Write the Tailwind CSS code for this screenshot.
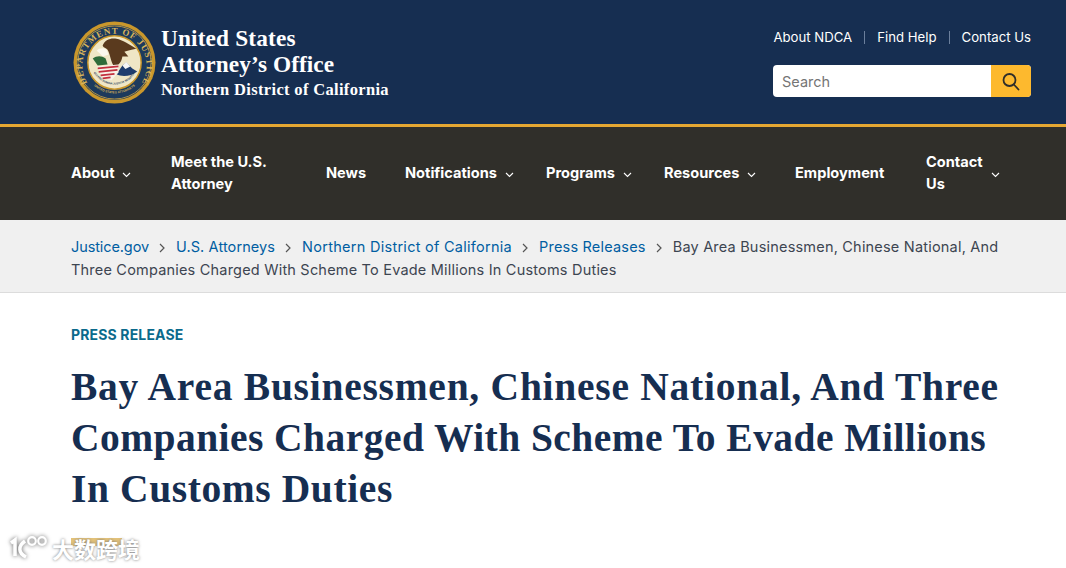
<!DOCTYPE html>
<html lang="en">
<head>
<meta charset="utf-8">
<title>Press Release</title>
<script src="https://cdn.jsdelivr.net/npm/@tailwindcss/browser@4"></script>
</head>
<body class="h-[568px] overflow-hidden bg-white font-['Inter','Liberation_Sans',sans-serif]">
<header class="h-[127px] bg-[#162e51] border-b-[3px] border-[#e5a732] pl-[73px] pr-[35px] flex justify-between">
  <div class="flex items-start gap-[5px] pt-[21px]">
    <svg class="w-[83px] h-[83px] shrink-0" viewBox="0 0 84 84">
      <defs>
        <path id="topArc" d="M13 60 A32.5 32.5 0 1 1 71 60"/>
        <path id="botArc" d="M16 60 A32 32 0 0 0 68 60"/>
        <path id="innerArc" d="M21 52 A24 24 0 0 0 63 52"/>
      </defs>
      <circle cx="42" cy="42" r="41.5" fill="#c9972c"/>
      <circle cx="42" cy="42" r="38" fill="#1d3a5c"/>
      <circle cx="42" cy="42" r="37" fill="none" stroke="#d6aa45" stroke-width=".8"/>
      <text font-family="Liberation Serif, serif" font-size="9" font-weight="700" fill="#d9b45a"><textPath href="#topArc" startOffset="50%" text-anchor="middle" textLength="138">DEPARTMENT OF JUSTICE</textPath></text>
      <text font-family="Liberation Sans, sans-serif" font-size="3.2" font-weight="700" fill="#d9b45a"><textPath href="#botArc" startOffset="50%" text-anchor="middle">UNITED STATES ATTORNEYS</textPath></text>
      <circle cx="42" cy="42" r="27" fill="#efe6c6" stroke="#c9972c" stroke-width="1.5"/>
      <path d="M30 25 C32 19 38 17 44 18 C50 19 57 24 64 28 C59 29 55 30 52 31 L56 36 L50 36 C49 42 46 45 42 46 C38 42 38 34 35 29 C33 27 31 27 30 25Z" fill="#5a3a1e"/>
      <path d="M24 30 C27 27 31 27 34 29 L36 34 L30 36 C28 33 26 32 24 30Z" fill="#fbf8ee"/>
      <path d="M44 54 L50 45 L54 42 L60 48 L65 51 C59 56 50 57 44 54Z" fill="#1f3d6e"/>
      <path d="M50 45 L54 41.5 L58 46 L53 48.5Z" fill="#f6f6f6"/>
      <path d="M24 46 L46 44 L46 52 L39 60 L30 58Z" fill="#f8f2e8"/>
      <path d="M25 48 L46 46 M26 51.5 L45 49.5 M28 55 L42 53.5 M30 58 L38 57" stroke="#c22f3d" stroke-width="1.7"/>
      <path d="M20 38 C24 35 29 35 33 38 L35 44 L25 45Z" fill="#2f6b3a"/>
      <text font-family="Liberation Sans, sans-serif" font-size="2.7" font-weight="700" fill="#1d3a5c"><textPath href="#innerArc" startOffset="50%" text-anchor="middle">QUI PRO DOMINA JUSTITIA SEQUITUR</textPath></text>
    </svg>
    <div class="text-white font-['Liberation_Serif',serif] font-bold pt-[4px]">
      <div class="text-[23.3px] leading-[26px] tracking-[0.15px]">United States</div>
      <div class="text-[23.3px] leading-[26px] tracking-[0.08px]">Attorney’s Office</div>
      <div class="text-[16.5px] leading-[25px] tracking-[0.33px]">Northern District of California</div>
    </div>
  </div>
  <div class="flex flex-col items-end pt-[28px]">
    <nav class="flex items-center text-white text-[13.2px] leading-[18px]">
      <a>About NDCA</a>
      <span class="w-px h-[13px] bg-[#6b7f9c] mx-3"></span>
      <a>Find Help</a>
      <span class="w-px h-[13px] bg-[#6b7f9c] mx-3"></span>
      <a>Contact Us</a>
    </nav>
    <div class="mt-[19px] w-[258px] h-[32px] flex rounded-[4px] overflow-hidden bg-white">
      <div class="flex-1 pl-[9px] text-[14.5px] leading-[33px] text-[#757575]">Search</div>
      <div class="w-10 bg-[#fdb92e] flex items-center justify-center">
        <svg class="w-[19px] h-[19px] -ml-[2px]" viewBox="0 0 19 19" fill="none" stroke="#2f2e2a" stroke-width="1.8"><circle cx="8.5" cy="8" r="6"/><path d="M12.8 12.5l4.7 5" stroke-linecap="round"/></svg>
      </div>
    </div>
  </div>
</header>
<nav class="h-[93px] bg-[#302f2a] pl-[71px] pb-[2px] flex items-center text-white text-[14.6px] font-bold leading-[22px]">
  <a class="w-[100px] flex items-center">About<svg class="ml-[8px] mt-[4px] w-[9px] h-[6px]" viewBox="0 0 9 6" fill="none" stroke="#fff" stroke-width="1.1"><path d="M1 1l3.5 3.5L8 1"/></svg></a>
  <a class="w-[155px]">Meet the U.S.<br>Attorney</a>
  <a class="w-[79px]">News</a>
  <a class="w-[141px] flex items-center">Notifications<svg class="ml-[8px] mt-[4px] w-[9px] h-[6px]" viewBox="0 0 9 6" fill="none" stroke="#fff" stroke-width="1.1"><path d="M1 1l3.5 3.5L8 1"/></svg></a>
  <a class="w-[118px] flex items-center">Programs<svg class="ml-[8px] mt-[4px] w-[9px] h-[6px]" viewBox="0 0 9 6" fill="none" stroke="#fff" stroke-width="1.1"><path d="M1 1l3.5 3.5L8 1"/></svg></a>
  <a class="w-[131px] flex items-center">Resources<svg class="ml-[8px] mt-[4px] w-[9px] h-[6px]" viewBox="0 0 9 6" fill="none" stroke="#fff" stroke-width="1.1"><path d="M1 1l3.5 3.5L8 1"/></svg></a>
  <a class="w-[131px]">Employment</a>
  <a class="w-[74px] flex items-center"><span class="w-[65px] shrink-0">Contact<br>Us</span><svg class="mt-[4px] w-[9px] h-[6px]" viewBox="0 0 9 6" fill="none" stroke="#fff" stroke-width="1.1"><path d="M1 1l3.5 3.5L8 1"/></svg></a>
</nav>
<div class="h-[73px] bg-[#f0f0f0] border-b border-[#dcdcdc] pl-[71px] pr-[60px] pt-[15px] text-[14.5px] leading-[23px] tracking-[0.2px] text-[#3d4551]">
  <a class="text-[#005ea2] tracking-[-0.1px]">Justice.gov</a><svg class="inline-block w-[27px] h-[10px]" viewBox="0 0 27 10" fill="none" stroke="#555" stroke-width="1.2"><path d="M11 1l4 4-4 4"/></svg><a class="text-[#005ea2] tracking-[0.1px]">U.S. Attorneys</a><svg class="inline-block w-[27px] h-[10px]" viewBox="0 0 27 10" fill="none" stroke="#555" stroke-width="1.2"><path d="M11 1l4 4-4 4"/></svg><a class="text-[#005ea2] tracking-[0.27px]">Northern District of California</a><svg class="inline-block w-[27px] h-[10px]" viewBox="0 0 27 10" fill="none" stroke="#555" stroke-width="1.2"><path d="M11 1l4 4-4 4"/></svg><a class="text-[#005ea2]">Press Releases</a><svg class="inline-block w-[27px] h-[10px]" viewBox="0 0 27 10" fill="none" stroke="#555" stroke-width="1.2"><path d="M11 1l4 4-4 4"/></svg><span>Bay Area Businessmen, Chinese National, And</span><br><span>Three Companies Charged With Scheme To Evade Millions In Customs Duties</span>
</div>
<main class="relative pl-[71px] pr-[60px] pt-[32px]">
  <div class="text-[14px] leading-[20px] font-bold tracking-[0.15px] text-[#0b6a8c] uppercase">Press Release</div>
  <h1 class="mt-[17px] text-[39.5px] leading-[51px] font-bold text-[#162e51] font-['Liberation_Serif',serif] tracking-[0.75px]">Bay Area Businessmen, Chinese National, And Three <span class="tracking-[0.45px]">Companies Charged With Scheme To Evade Millions</span> <span class="tracking-[0.6px]">In Customs Duties</span></h1>
  <div class="mt-[23px] w-[51px] h-[8px] bg-[#e3c27a]"></div>
  <div class="absolute left-[8px] top-[241px] flex items-center gap-[4px] text-white [text-shadow:0_0_3px_#777]">
    <svg class="w-[40px] h-[28px]" viewBox="0 0 40 28" fill="none" stroke="#fff" stroke-width="3.5" style="filter:drop-shadow(0 0 2px #666)"><path d="M3 9l4-3v16M17 7c-7 5-7 12 1 16"/><circle cx="24" cy="7" r="3.8" stroke-width="2.2"/><circle cx="34" cy="7" r="3.8" stroke-width="2.2"/></svg>
    <span class="text-[22px] leading-[28px] font-bold font-['Noto_Sans_CJK_SC',sans-serif]">大数跨境</span>
  </div>
</main>
</body>
</html>
